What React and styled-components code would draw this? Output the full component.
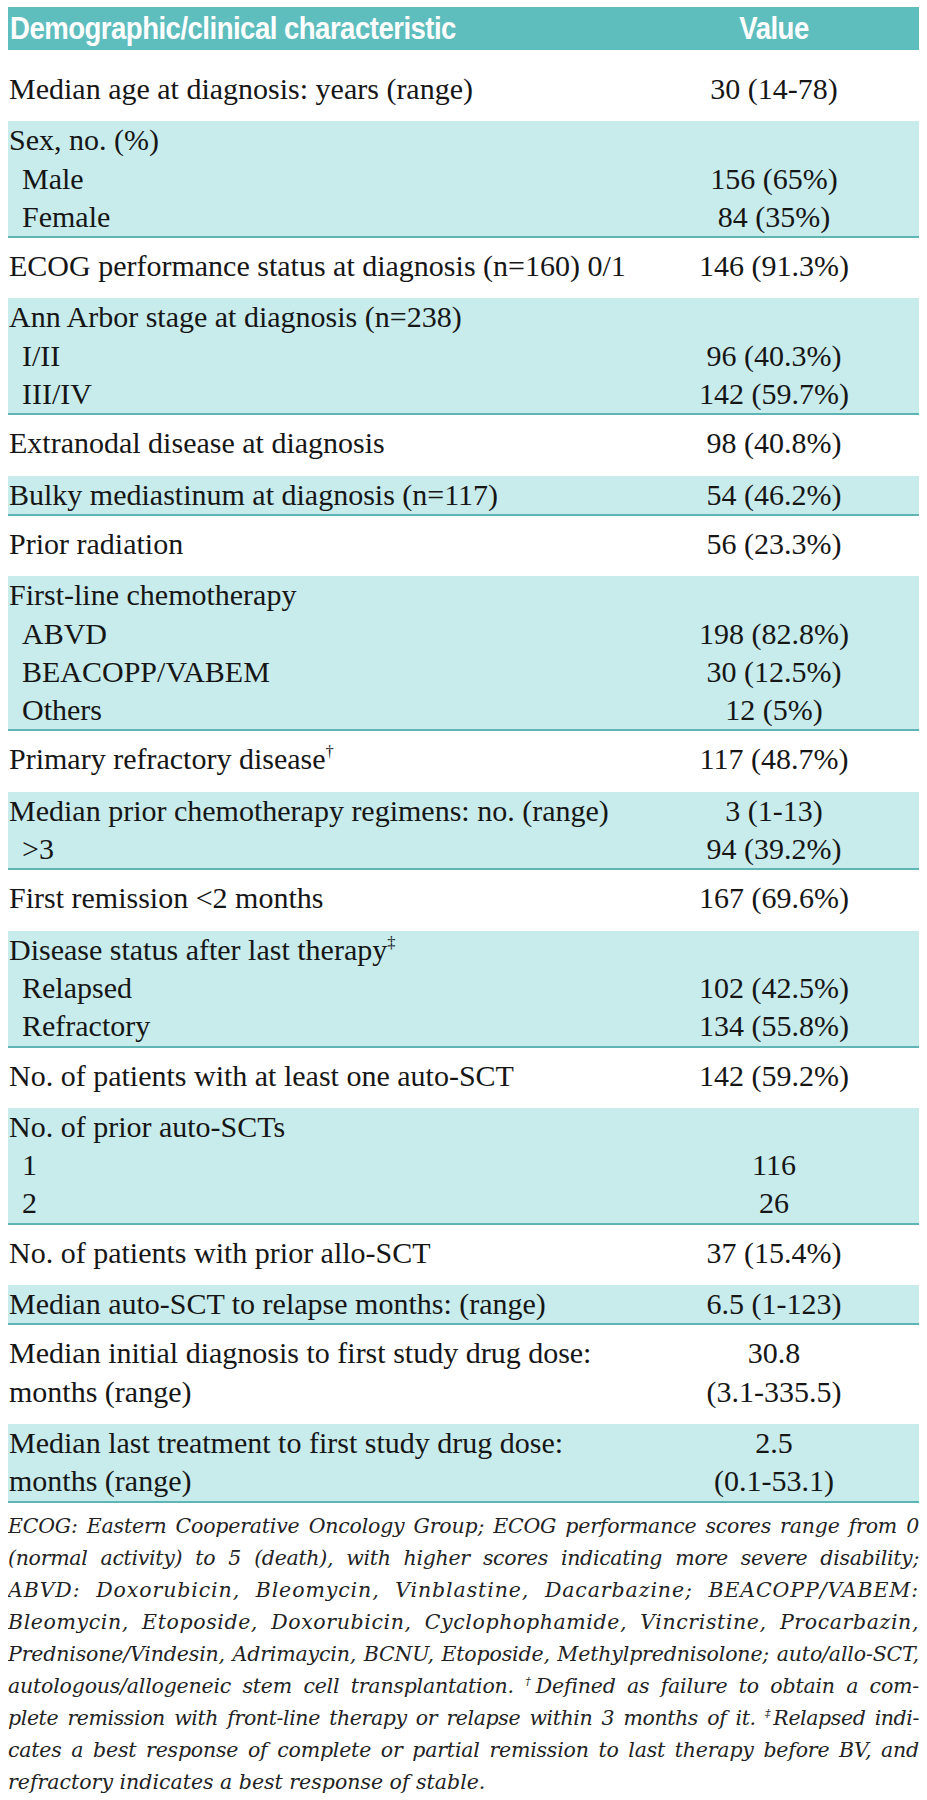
import React from "react";
import styled, { createGlobalStyle } from "styled-components";

const GlobalStyle = createGlobalStyle`
  body {
    margin: 7px 8px 0;
    background: #ffffff;
  }
`;

const Table = styled.div`
  width: 911px;
  font-family: "Liberation Serif", "Times New Roman", serif;
  color: #161616;
`;

const Header = styled.div`
  display: grid;
  grid-template-columns: 1fr 290px;
  align-items: center;
  height: 43px;
  margin-bottom: 11px;
  background: #5ebdbd;
  color: #ffffff;
  font-family: "Liberation Sans", "Arial", sans-serif;
  font-weight: bold;
  font-size: 31px;
  letter-spacing: -0.6px;
`;

const HeadCell = styled.div`
  padding-left: ${(p) => (p.$center ? 0 : 2)}px;
  text-align: ${(p) => (p.$center ? "center" : "left")};
`;

/* the heading face is a condensed bold sans; squeeze the nearest one we have */
const HeadText = styled.span`
  display: inline-block;
  transform: scaleX(0.89);
  transform-origin: ${(p) => (p.$center ? "center" : "left")} center;
`;

const Row = styled.div`
  display: grid;
  grid-template-columns: 1fr 290px;
  font-size: 30px;
  line-height: 38.3px;
  padding: ${(p) => (p.$shade ? "0" : "9px 0 13px")};
  background: ${(p) => (p.$shade ? "#c8ebeb" : "transparent")};
  border-bottom: ${(p) => (p.$shade ? "2px solid #5fb4b4" : "none")};
`;

const Cell = styled.div`
  display: flex;
  flex-direction: column;
`;

const Label = styled.div`
  padding-left: ${(p) => (p.$indent ? 14 : 1)}px;
  white-space: nowrap;
`;

const Value = styled.div`
  text-align: center;
  white-space: nowrap;
  min-height: 38.3px;
`;

const Sup = styled.sup`
  font-size: 0.55em;
  line-height: 0;
  vertical-align: 0.75em;
`;

const Notes = styled.div`
  padding-top: 7px;
  font-family: "DejaVu Serif", "Liberation Serif", serif;
  font-style: italic;
  font-size: 20.5px;
  line-height: 32px;
  color: #222222;
`;

const NoteLine = styled.div`
  white-space: nowrap;
  text-align: justify;
  text-align-last: ${(p) => (p.$last ? "left" : "justify")};
  letter-spacing: ${(p) => p.$tight || 0}px;
`;

const rows = [
  [["Median age at diagnosis: years (range)", "30 (14-78)"]],
  [
    ["Sex, no. (%)", ""],
    ["Male", "156 (65%)", true],
    ["Female", "84 (35%)", true],
  ],
  [["ECOG performance status at diagnosis (n=160) 0/1", "146 (91.3%)"]],
  [
    ["Ann Arbor stage at diagnosis (n=238)", ""],
    ["I/II", "96 (40.3%)", true],
    ["III/IV", "142 (59.7%)", true],
  ],
  [["Extranodal disease at diagnosis", "98 (40.8%)"]],
  [["Bulky mediastinum at diagnosis (n=117)", "54 (46.2%)"]],
  [["Prior radiation", "56 (23.3%)"]],
  [
    ["First-line chemotherapy", ""],
    ["ABVD", "198 (82.8%)", true],
    ["BEACOPP/VABEM", "30 (12.5%)", true],
    ["Others", "12 (5%)", true],
  ],
  [[<>Primary refractory disease<Sup>†</Sup></>, "117 (48.7%)"]],
  [
    ["Median prior chemotherapy regimens: no. (range)", "3 (1-13)"],
    [">3", "94 (39.2%)", true],
  ],
  [["First remission <2 months", "167 (69.6%)"]],
  [
    [<>Disease status after last therapy<Sup>‡</Sup></>, ""],
    ["Relapsed", "102 (42.5%)", true],
    ["Refractory", "134 (55.8%)", true],
  ],
  [["No. of patients with at least one auto-SCT", "142 (59.2%)"]],
  [
    ["No. of prior auto-SCTs", ""],
    ["1", "116", true],
    ["2", "26", true],
  ],
  [["No. of patients with prior allo-SCT", "37 (15.4%)"]],
  [["Median auto-SCT to relapse months: (range)", "6.5 (1-123)"]],
  [
    ["Median initial diagnosis to first study drug dose:", "30.8"],
    ["months (range)", "(3.1-335.5)"],
  ],
  [
    ["Median last treatment to first study drug dose:", "2.5"],
    ["months (range)", "(0.1-53.1)"],
  ],
];

const notes = [
  ["ECOG: Eastern Cooperative Oncology Group; ECOG performance scores range from 0", -0.2],
  ["(normal activity) to 5 (death), with higher scores indicating more severe disability;", -0.3],
  ["ABVD: Doxorubicin, Bleomycin, Vinblastine, Dacarbazine; BEACOPP/VABEM:", 0.9],
  ["Bleomycin, Etoposide, Doxorubicin, Cyclophophamide, Vincristine, Procarbazin,", 0.6],
  ["Prednisone/Vindesin, Adrimaycin, BCNU, Etoposide, Methylprednisolone; auto/allo-SCT,", -0.15],
  [<>autologous/allogeneic stem cell transplantation. <Sup>†</Sup>Defined as failure to obtain a com-</>, -0.2],
  [<>plete remission with front-line therapy or relapse within 3 months of it. <Sup>‡</Sup>Relapsed indi-</>, -0.4],
  ["cates a best response of complete or partial remission to last therapy before BV, and", -0.2],
  ["refractory indicates a best response of stable."],
];

export default function App() {
  return (
    <>
      <GlobalStyle />
      <Table>
        <Header>
          <HeadCell>
            <HeadText>Demographic/clinical characteristic</HeadText>
          </HeadCell>
          <HeadCell $center>
            <HeadText $center>Value</HeadText>
          </HeadCell>
        </Header>
        {rows.map((lines, i) => (
          <Row key={i} $shade={i % 2 === 1}>
            <Cell>
              {lines.map((l, j) => (
                <Label key={j} $indent={l[2]}>{l[0]}</Label>
              ))}
            </Cell>
            <Cell>
              {lines.map((l, j) => (
                <Value key={j}>{l[1]}</Value>
              ))}
            </Cell>
          </Row>
        ))}
        <Notes>
          {notes.map((n, i) => (
            <NoteLine key={i} $last={i === notes.length - 1} $tight={n[1]}>
              {n[0]}
            </NoteLine>
          ))}
        </Notes>
      </Table>
    </>
  );
}
